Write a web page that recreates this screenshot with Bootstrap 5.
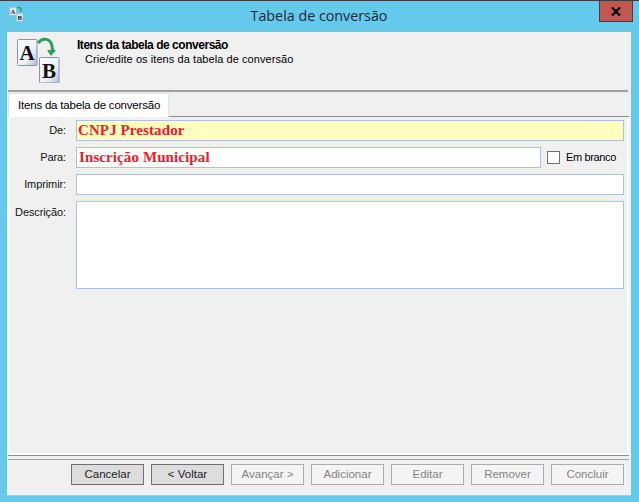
<!DOCTYPE html>
<html lang="pt">
<head>
<meta charset="utf-8">
<title>Tabela de conversão</title>
<link rel="stylesheet" href="https://cdn.jsdelivr.net/npm/bootstrap@5.3.0/dist/css/bootstrap.min.css">
<style>
html,body{height:502px;overflow:hidden}
body{background:#65c9ec;border-top:1px solid #3a3d42;font-family:"Liberation Sans",Arial,sans-serif;font-size:12px;color:#000;width:639px}
.win-top{height:30px;padding-left:9px}
.win-icon{width:16px;height:16px;margin-top:5px}
.win-title{flex:1;text-align:center;font-family:"Open Sans",sans-serif;font-size:14.3px;line-height:30px;color:#1b2a38;padding-left:0;margin-right:-14px}
.win-close{width:34px;height:21px;background:#c0584f;border:1px solid #4a3a3c;border-top:0;margin-right:6px;margin-left:auto}
.win-close svg{display:block}
.client{margin:0 8px 0 7px;height:464px;background:#f0f0f0;border-top:1px solid #8fb6cf;box-shadow:0 1px 0 #a9cbdc}
.head-area{height:60px;border-bottom:2px solid #a0a0a0;margin:0 3px 0 1px;padding:0 0 0 8px}
.head-icon{width:48px;height:48px;margin-top:3px;flex:none}
.head-text{margin-left:13px;padding-top:6px;line-height:14px}
.head-text b{display:block;font-size:12px;font-weight:700;letter-spacing:-.47px}
.head-sub{padding-left:8px;font-size:11px;letter-spacing:.07px}
.tab-strip{margin:1px 2px 0 1px;border-bottom:1px solid #8c8c8c;height:24px;flex-wrap:nowrap}
.tab-strip .nav-link{height:24px;width:161px;padding:3px 0 0 9px;font-size:11.5px;letter-spacing:-.2px;color:#000;background:#fff;border:1px solid #8c8c8c;border-bottom:0;border-radius:0;line-height:16px;margin:0}
.panel-zone{height:338px;margin:0 2px 0 1px;border-left:2px solid #fff;border-right:2px solid #fff;border-bottom:2px solid #fff;padding:3px 3px 0 66px;position:relative;box-shadow:0 1px 0 #8c8c96;gap:6px}
.f-row{gap:0}
.f-label{position:absolute;left:0;width:56px;text-align:right;font-size:11px;letter-spacing:-.1px;color:#111}
.desc-label{margin-top:3px}
.f-input{height:21px;border:1px solid #abc1de;border-radius:0;padding:0 1px 0 1px;background:#fff;box-shadow:none}
.f-input.yellow{background:#ffffc0}
.f-input.redtxt{font-family:"Liberation Serif",serif;font-weight:700;font-size:15px;letter-spacing:.1px;color:#ed1c2e;line-height:17px}
.para-input{width:465px;flex:none}
.f-input.para-input{padding-left:2px}
input.check-box.form-check-input{width:13px;height:13px;border:1px solid #707070;border-radius:0;background:#fff;margin:0 0 0 6px;flex:none}
.check-label{font-size:11px;margin-left:6px;letter-spacing:-.35px;margin-bottom:0}
.desc-input{height:88px;resize:none}
.foot-line{height:1px;background:#a0a0a0;margin:4px 2px 0 1px}
.foot{gap:7px;padding:4px 0 0 64px}
.foot .btn{width:73px;height:21px;padding:0;font-size:11.5px;line-height:19px;border-radius:0;border:1px solid #707070;background:#ddd;color:#222;--bs-btn-disabled-opacity:1}
.foot .btn:disabled{border-color:#adadad;background:#f4f4f4;color:#838383}
</style>
</head>
<body>
<div class="win-top d-flex">
  <svg class="win-icon" viewBox="0 0 48 48"><rect x="2" y="4" width="20" height="24" fill="#dfe6f2" stroke="#9aa"/><rect x="22" y="22" width="20" height="24" fill="#dfe6f2" stroke="#9aa"/><text x="12" y="23" text-anchor="middle" font-family="Liberation Serif" font-weight="700" font-size="20" fill="#333">A</text><text x="32" y="41" text-anchor="middle" font-family="Liberation Serif" font-weight="700" font-size="20" fill="#111">B</text><path d="M24 6c8-4 13 0 12 10" fill="none" stroke="#2aa05a" stroke-width="5"/></svg>
  <div class="win-title">Tabela de conversão</div>
  <div class="win-close d-flex align-items-center justify-content-center"><svg width="10" height="9" viewBox="0 0 10 9"><path d="M1 .5 5 4.5 9 .5M1 8.5l4-4 4 4" fill="none" stroke="#000" stroke-width="2.2"/></svg></div>
</div>
<div class="client d-flex flex-column">
  <div class="head-area d-flex">
    <svg class="head-icon" viewBox="0 0 48 48">
      <defs><linearGradient id="tile" x1="0" y1="0" x2="1" y2="1"><stop offset="0" stop-color="#fbfcfe"/><stop offset=".6" stop-color="#eef1f7"/><stop offset="1" stop-color="#b4bfd2"/></linearGradient></defs>
      <rect x="1.500" y="4.500" width="19.500" height="26" rx="1" fill="url(#tile)" stroke="#8a95a3"/>
      <rect x="23.500" y="22.500" width="19.500" height="25.500" rx="1" fill="url(#tile)" stroke="#8a95a3"/>
      <text x="11" y="25" text-anchor="middle" font-family="Liberation Serif,serif" font-weight="700" font-size="21" fill="#111">A</text>
      <text x="33" y="43" text-anchor="middle" font-family="Liberation Serif,serif" font-weight="700" font-size="21" fill="#111">B</text>
      <path d="M22 8c4-5 14-7 14.500 7" fill="none" stroke="#2e9e5a" stroke-width="3"/>
      <path d="M31 15h9l-5 6z" fill="#2e9e5a"/>
    </svg>
    <div class="head-text">
      <b>Itens da tabela de conversão</b>
      <div class="head-sub">Crie/edite os itens da tabela de conversão</div>
    </div>
  </div>
  <ul class="nav nav-tabs tab-strip">
    <li class="nav-item"><a class="nav-link active" href="#">Itens da tabela de conversão</a></li>
  </ul>
  <div class="panel-zone d-flex flex-column">
    <div class="f-row d-flex align-items-center"><label class="f-label">De:</label><input class="form-control f-input yellow redtxt" value="CNPJ Prestador"></div>
    <div class="f-row d-flex align-items-center"><label class="f-label">Para:</label><input class="form-control f-input redtxt para-input" value="Inscrição Municipal"><input type="checkbox" class="form-check-input check-box"><label class="check-label">Em branco</label></div>
    <div class="f-row d-flex align-items-center"><label class="f-label">Imprimir:</label><input class="form-control f-input"></div>
    <div class="f-row d-flex align-items-start"><label class="f-label desc-label">Descrição:</label><textarea class="form-control f-input desc-input"></textarea></div>
  </div>
  <div class="foot-line"></div>
  <div class="foot d-flex">
    <button class="btn">Cancelar</button>
    <button class="btn">&lt; Voltar</button>
    <button class="btn" disabled>Avançar &gt;</button>
    <button class="btn" disabled>Adicionar</button>
    <button class="btn" disabled>Editar</button>
    <button class="btn" disabled>Remover</button>
    <button class="btn" disabled>Concluir</button>
  </div>
</div>
<script src="https://cdn.jsdelivr.net/npm/bootstrap@5.3.0/dist/js/bootstrap.bundle.min.js"></script>
</body>
</html>
